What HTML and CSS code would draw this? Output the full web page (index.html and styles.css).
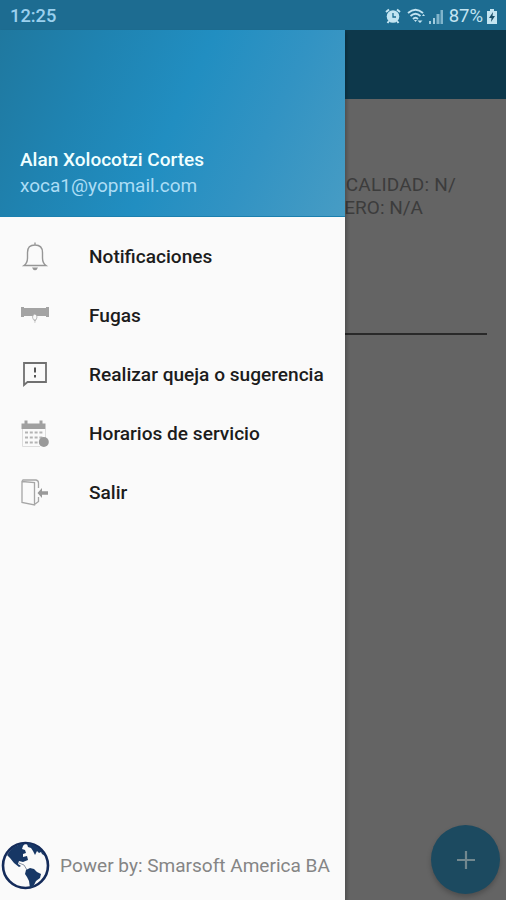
FILE: index.html
```html
<!DOCTYPE html>
<html lang="es">
<head>
<meta charset="utf-8">
<title>Menú</title>
<link rel="stylesheet" href="styles.css">
</head>
<body>
<div class="screen">
  <header class="status">
    <span class="clock">12:25</span>
    <div class="indicators">
      <svg class="alarm" width="16" height="16" viewBox="0 0 16 16"><circle cx="8" cy="8.500" r="6.300" fill="currentColor"/><path d="M1 4L4 1.500M12 1.500L15 4M4 13L2.500 15M12 13l1.500 2" stroke="currentColor" stroke-width="2"/><path d="M8 5v4h3" fill="none" stroke="#1d6c91" stroke-width="1.300"/></svg>
      <svg class="wifi" width="19" height="16" viewBox="0 0 19 16"><g fill="none" stroke="currentColor" stroke-width="1.800"><path d="M1 5Q8.500-1.500 16 5M3.500 8Q8.500 3.500 13.500 8M6 11Q8.500 8.500 11 11"/></g><path d="M7 12h3l-1.500 2zM10.500 12.500h5L13 15zM15 8h3l-1.500-2z" fill="currentColor"/></svg>
      <svg class="signal" width="14" height="15" viewBox="0 0 14 15"><path d="M0 12h2v3H0zM4 9h2v6H4z" fill="currentColor" opacity=".8"/><path d="M7.500 5h3v10h-3zM11.500 1H14v14h-2.500z" fill="currentColor" opacity=".6"/></svg>
      <span class="percent">87%</span>
      <svg class="battery" width="10" height="15" viewBox="0 0 10 15"><path d="M3 0h4v2h3v13H0V2h3z" fill="currentColor"/><path d="M6 3L2 9h2.500L4 13l4-6H5.500z" fill="#174d67"/></svg>
    </div>
  </header>
  <div class="body">
    <nav class="drawer">
      <div class="account">
        <div class="name">Alan Xolocotzi Cortes</div>
        <div class="email">xoca1@yopmail.com</div>
      </div>
      <ul class="menu">
        <li><svg width="30" height="30" viewBox="0 0 30 30"><g fill="none" stroke="#969696" stroke-width="1.400"><path d="M15 .5v2.500M4 23.500Q7.500 21 7.500 16v-5.500Q7.500 3 15 3t7.500 7.500V16q0 5 3.500 7.500z"/></g><path d="M12 25.500h6q-1 2.700-3 2.700t-3-2.700z" fill="#969696"/></svg><span>Notificaciones</span></li>
        <li><svg width="30" height="30" viewBox="0 0 30 30"><path d="M1 6h3v1h22V6h3v10h-3v-1H4v1H1z" fill="#a3a3a3"/><path d="M12.500 16q0-2 2.300-3 2.200 1 2.200 3-.2 2.500-2.200 4-2-1.500-2.300-4z" fill="#fafafa" stroke="#aaa" stroke-width=".8"/><path d="M14.500 18h1l-.3 4h-.5z" fill="#aaa"/></svg><span>Fugas</span></li>
        <li><svg width="30" height="30" viewBox="0 0 30 30"><path d="M4 3h22v19H7.500L4 25z" fill="none" stroke="#707070" stroke-width="1.800"/><path d="M15 7.500v5M15 15v2.500" stroke="#555" stroke-width="2"/></svg><span>Realizar queja o sugerencia</span></li>
        <li><svg width="30" height="30" viewBox="0 0 30 30"><path d="M1.500 10V4.500h3V1.500h3v3h12v-3h3v3h3V10z" fill="#a0a0a0"/><path d="M2.500 10v17.500H20M25.500 10v9" fill="none" stroke="#ddd"/><path d="M5 13.500h19M5 18.500h18M5 23.500h15" stroke="#b4b4b4" stroke-width="1.800" stroke-dasharray="3 1.800"/><circle cx="23.800" cy="23" r="5" fill="#999"/></svg><span>Horarios de servicio</span></li>
        <li><svg width="30" height="30" viewBox="0 0 30 30"><g fill="none" stroke="#a6a6a6" stroke-width="1.300"><path d="M2 3.500L14.500 4.500V27L2 24.500zM2 3.500l1-1.500H16q2.500.5 2.500 3v5M14.500 26.500l4-3V19"/></g><path d="M17.500 15l4.500-5v3.300h6v3.400h-6V20z" fill="#999"/></svg><span>Salir</span></li>
      </ul>
      <footer class="credit">
        <svg width="49" height="49" viewBox="0 0 49 49"><circle cx="24.500" cy="24.500" r="22.500" fill="#fafafa" stroke="#142b5a" stroke-width="2.600"/><path d="M6 14Q12 3 24 2.500L22 5l-1 3 3 1 1 3-3 1v3l4-1 1 4-5 2-4-1-1 3 3 2-2 1-5-4-4-5z" fill="#173765"/><path d="M28 2Q39 5 44 15l-3-2-1-2-2 1-2-2-2 4-2-4-2-3-3-1-1-3z" fill="#173765"/><path d="M18 22l5 2 3 5" fill="none" stroke="#8993a3"/><path d="M25 29l4-2 4 1 3 3 4 2-1 4-4 3-3 6-3 1-1-7-2-4-2-3z" fill="#173765"/></svg>
        <span>Power by: Smarsoft America BA</span>
      </footer>
    </nav>
    <main class="page">
      <div class="toolbar"></div>
      <div class="content">
        <div class="line first"><span>CALIDAD: N/</span></div>
        <div class="line second"><span>ERO: N/A</span></div>
        <div class="rule"></div>
        <div class="fab"><svg width="20" height="20" viewBox="0 0 20 20"><path d="M10 1v18M1 10h18" stroke="#72888f" stroke-width="2.200"/></svg></div>
      </div>
    </main>
  </div>
</div>
</body>
</html>
```
FILE: styles.css
```css
* { box-sizing: border-box; }
body { margin: 0; font-family: Roboto, sans-serif; }
.screen { width: 506px; height: 900px; display: flex; flex-direction: column; overflow: hidden; background: #646464; }
.status { height: 30px; flex: none; background: #1d6c91; color: #c3e4f1; display: flex; justify-content: space-between; align-items: center; padding: 2px 9px 0 10px; }
.clock { font-size: 18.3px; font-weight: 500; color: #9bd0ee; line-height: 28px; }
.indicators { display: flex; align-items: center; font-size: 18.5px; line-height: 28px; }
.wifi { margin-left: 6px; }
.signal { margin-left: 3px; }
.percent { margin-left: 6px; }
.battery { margin-left: 4px; }
.body { display: grid; grid-template-columns: 345px 1fr; flex: 1; min-height: 0; }
.drawer { background: #fafafa; display: flex; flex-direction: column; z-index: 1; box-shadow: 2px 2px 3px rgba(0,0,0,.2); }
.account { height: 187px; flex: none; padding: 117px 20px 0; white-space: nowrap; background: linear-gradient(115deg, #1f789f 0%, #1f83b1 25%, #218ec1 50%, #3293c3 73%, #479cc4 100%); border-bottom: 1px solid #1b80af; }
.name { font-size: 19px; line-height: 25px; color: #f0ffff; font-weight: 500; }
.email { font-size: 19px; line-height: 27px; color: #acddf5; }
.menu { list-style: none; margin: 0; padding: 10px 0 0 20px; flex: 1; }
.menu li { height: 59px; display: flex; align-items: center; gap: 39px; color: #1c1c1c; font-size: 19.1px; font-weight: 500; white-space: nowrap; }
.menu svg { flex: none; }
.credit { height: 68px; display: flex; align-items: center; gap: 10px; padding: 0 0 1px 1px; color: #858585; font-size: 19.05px; white-space: nowrap; }
.credit svg { flex: none; }
.page { display: flex; flex-direction: column; min-width: 0; }
.toolbar { height: 69px; flex: none; background: #0d384b; }
.content { flex: 1; display: flex; flex-direction: column; padding: 74px 19px 6px 0; }
.line { height: 23px; line-height: 23px; font-size: 19px; color: #3c3c3c; display: flex; justify-content: flex-end; white-space: nowrap; }
.first { width: 111px; letter-spacing: .2px; }
.second { width: 78px; }
.rule { height: 2px; margin-top: 114px; background: #292929; }
.fab { width: 69px; height: 69px; margin: auto -13px 0 auto; border-radius: 50%; background: #1c4a60; display: flex; align-items: center; justify-content: center; box-shadow: 0 3px 5px rgba(0,0,0,.22); }
```
